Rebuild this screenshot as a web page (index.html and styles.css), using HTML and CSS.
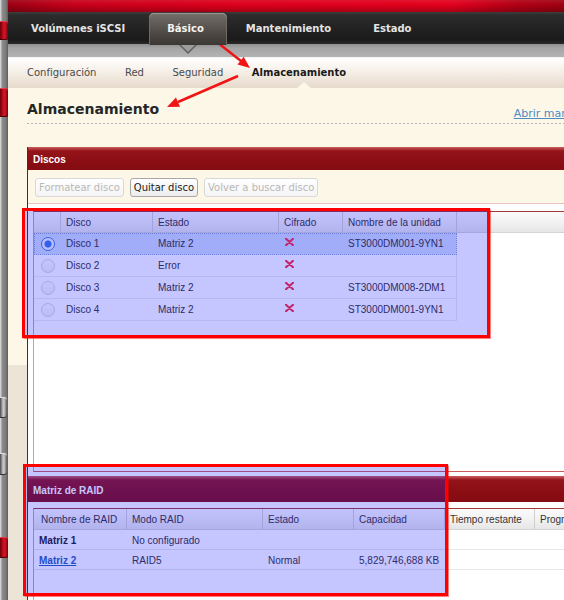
FILE: index.html
```html
<!DOCTYPE html>
<html lang="es">
<head>
<meta charset="utf-8">
<title>Almacenamiento</title>
<link rel="stylesheet" href="styles.css">
</head>
<body>
<div class="screen">
  <div class="edge">
    <span class="edge-red red1"></span>
    <span class="edge-red red2"></span>
    <span class="edge-knob knob1"></span>
    <span class="edge-knob knob2"></span>
    <span class="edge-red red3"></span>
  </div>
  <div class="main">
    <div class="topband"></div>
    <nav class="tabs">
      <span class="tab">Volúmenes iSCSI</span>
      <span class="tab active">Básico</span>
      <span class="tab">Mantenimiento</span>
      <span class="tab">Estado</span>
    </nav>
    <div class="greyband"></div>
    <nav class="subnav">
      <span class="sub">Configuración</span>
      <span class="sub">Red</span>
      <span class="sub">Seguridad</span>
      <span class="sub active">Almacenamiento</span>
    </nav>
    <div class="content">
      <div class="title-row">
        <h1 class="title">Almacenamiento</h1>
        <a class="manual" href="#">Abrir manual</a>
      </div>

      <section class="panel disks">
        <div class="panel-head">Discos</div>
        <div class="toolbar">
          <button class="btn" disabled>Formatear disco</button>
          <button class="btn">Quitar disco</button>
          <button class="btn" disabled>Volver a buscar disco</button>
        </div>
        <div class="gridbox disk-box">
          <div class="ghead">
            <div class="dcols">
              <span class="hc"></span>
              <span class="hc">Disco</span>
              <span class="hc">Estado</span>
              <span class="hc">Cifrado</span>
              <span class="hc">Nombre de la unidad</span>
            </div>
          </div>
          <div class="drows">
            <div class="drow dcols selected">
              <span class="rc"><i class="radio checked"></i></span>
              <span class="rc">Disco 1</span>
              <span class="rc">Matriz 2</span>
              <span class="rc cross-cell"><svg class="cross" viewBox="0 0 9 8" width="9" height="8"><path d="M1 0.8 L8 7.2 M8 0.8 L1 7.2"/></svg></span>
              <span class="rc">ST3000DM001-9YN1</span>
            </div>
            <div class="drow dcols">
              <span class="rc"><i class="radio"></i></span>
              <span class="rc">Disco 2</span>
              <span class="rc">Error</span>
              <span class="rc cross-cell"><svg class="cross" viewBox="0 0 9 8" width="9" height="8"><path d="M1 0.8 L8 7.2 M8 0.8 L1 7.2"/></svg></span>
              <span class="rc"></span>
            </div>
            <div class="drow dcols">
              <span class="rc"><i class="radio"></i></span>
              <span class="rc">Disco 3</span>
              <span class="rc">Matriz 2</span>
              <span class="rc cross-cell"><svg class="cross" viewBox="0 0 9 8" width="9" height="8"><path d="M1 0.8 L8 7.2 M8 0.8 L1 7.2"/></svg></span>
              <span class="rc">ST3000DM008-2DM1</span>
            </div>
            <div class="drow dcols">
              <span class="rc"><i class="radio"></i></span>
              <span class="rc">Disco 4</span>
              <span class="rc">Matriz 2</span>
              <span class="rc cross-cell"><svg class="cross" viewBox="0 0 9 8" width="9" height="8"><path d="M1 0.8 L8 7.2 M8 0.8 L1 7.2"/></svg></span>
              <span class="rc">ST3000DM001-9YN1</span>
            </div>
          </div>
        </div>
      </section>

      <section class="panel raid">
        <div class="panel-head">Matriz de RAID</div>
        <div class="gridbox raid-box">
          <div class="ghead rcols">
            <span class="hc first">Nombre de RAID</span>
            <span class="hc">Modo RAID</span>
            <span class="hc">Estado</span>
            <span class="hc">Capacidad</span>
            <span class="hc">Tiempo restante</span>
            <span class="hc">Progreso</span>
          </div>
          <div class="rrow rcols">
            <span class="rc first"><b>Matriz 1</b></span>
            <span class="rc">No configurado</span>
            <span class="rc"></span>
            <span class="rc"></span>
            <span class="rc"></span>
            <span class="rc"></span>
          </div>
          <div class="rrow rcols">
            <span class="rc first"><a class="raid-link" href="#">Matriz 2</a></span>
            <span class="rc">RAID5</span>
            <span class="rc">Normal</span>
            <span class="rc">5,829,746,688 KB</span>
            <span class="rc"></span>
            <span class="rc"></span>
          </div>
        </div>
      </section>
    </div>
  </div>

  <div class="mark mark-disks"></div>
  <div class="mark mark-raid"></div>
  <svg class="arrows" width="564" height="600" viewBox="0 0 564 600">
    <line x1="199" y1="28" x2="241" y2="61" />
    <polygon points="250,68 237.5,64.5 243.7,56.7" />
    <line x1="238" y1="76" x2="178" y2="102" />
    <polygon points="167,107 176,97.6 180,106.8" />
  </svg>
</div>
</body>
</html>
```
FILE: styles.css
```css
* { box-sizing: border-box; }

body {
  margin: 0;
  background: #fdf7e8;
  font-family: "DejaVu Sans", Verdana, sans-serif;
}

.screen {
  position: relative;
  display: flex;
  width: 564px;
  height: 600px;
  overflow: hidden;
}

/* left window edge */
.edge {
  flex: none;
  width: 8px;
  display: flex;
  flex-direction: column;
  background: linear-gradient(to right, #cfcfcf 0, #cfcfcf 1px, #8c8c8c 2px, #7a7a7a 6px, #5a5a5a 8px);
}
.edge-red {
  display: block;
  width: 8px;
  border-radius: 0 2px 2px 0;
  background: linear-gradient(to right, #6e0008, #c81020 45%, #d41626 60%, #7a000a);
  box-shadow: inset 0 1px 0 #e04050, inset 0 -1px 0 #500005;
}
.edge-knob {
  display: block;
  width: 7px;
  border-radius: 0 3px 3px 0;
  background: linear-gradient(to right, #4a4a4a, #b8b8b8 40%, #d0d0d0 55%, #5a5a5a);
  box-shadow: inset 0 1px 0 #ddd, inset 0 -1px 0 #333;
}
.red1 { margin-top: 21px; height: 19px; }
.red2 { margin-top: 48px; height: 29px; }
.knob1 { margin-top: 280px; height: 21px; }
.knob2 { margin-top: 35px; height: 22px; }
.red3 { margin-top: 62px; height: 21px; }

.main {
  flex: 1;
  min-width: 0;
  display: flex;
  flex-direction: column;
  overflow: hidden;
}

/* top red band */
.topband {
  flex: none;
  height: 12px;
  background:
    linear-gradient(to bottom, rgba(255,255,255,0.08), rgba(0,0,0,0) 40%, rgba(0,0,0,0.25)),
    linear-gradient(to right, #9c0012 0, #c8001a 12%, #dc001c 40%, #e2001d 80%, #b00014 92%, #a00012 100%);
}

/* main tabs */
.tabs {
  flex: none;
  position: relative;
  z-index: 2;
  display: flex;
  height: 32px;
  padding-left: 2px;
  background: linear-gradient(to bottom, #3e3e3e 0, #2c2c2c 3px, #202020 60%, #1a1a1a 88%, #2a2a2a 100%);
}
.tab {
  position: relative;
  margin-top: 1px;
  height: 31px;
  padding: 1px 21px 0;
  line-height: 30px;
  font-size: 10px;
  font-weight: bold;
  color: #e4e4e4;
  white-space: nowrap;
}
.tab.active {
  height: 32px;
  margin-left: 3px;
  margin-right: -2px;
  padding: 1px 23px 0 18px;
  color: #f4f4f4;
  border-radius: 5px 5px 0 0;
  background: linear-gradient(to bottom, #74706b 0, #625d58 30%, #4a4540 70%, #3c3833 100%);
  box-shadow: inset 0 1px 0 #9a958f, inset 1px 0 0 #6f6a64, inset -1px 0 0 #6f6a64;
}
.tab.active::before,
.tab.active::after {
  content: "";
  position: absolute;
  left: 50%;
  width: 0;
  height: 0;
  border-style: solid;
  border-color: transparent;
}
.tab.active::before {
  top: 32px;
  margin-left: -9px;
  border-width: 9px 9px 0 9px;
  border-top-color: #5e5e5e;
}
.tab.active::after {
  top: 32px;
  margin-left: -7px;
  border-width: 7px 7px 0 7px;
  border-top-color: #9d9d9d;
}

.greyband {
  flex: none;
  height: 14px;
  border-bottom: 1px solid #f2f2f2;
  background: linear-gradient(to bottom, #8e8e8e 0, #a4a4a4 30%, #b4b4b4 100%);
}

/* sub navigation */
.subnav {
  flex: none;
  display: flex;
  height: 30px;
  padding-left: 19px;
  gap: 28.5px;
  background: linear-gradient(to bottom, #ffffff 0, #f7f1ea 40%, #e6dacb 100%);
}
.sub {
  position: relative;
  line-height: 29px;
  font-size: 10px;
  color: #4a4a4a;
  white-space: nowrap;
}
.sub.active {
  font-weight: bold;
  color: #1a1a1a;
}
.sub.active::after {
  content: "";
  position: absolute;
  left: 44px;
  bottom: -1px;
  width: 0;
  height: 0;
  border-style: solid;
  border-width: 0 8px 7px 8px;
  border-color: transparent transparent #fdf7e8 transparent;
}

/* content */
.content {
  flex: 1;
  padding: 12px 0 0 19px;
  background-color: #fdf7e8;
  background-image: linear-gradient(to bottom, rgba(0,0,0,0) 277px, #ece5d7 277px);
  background-size: 19px 100%;
  background-repeat: no-repeat;
}

.title-row {
  display: flex;
  justify-content: space-between;
  align-items: flex-end;
  width: 558px;
  padding-bottom: 6px;
  background-image: repeating-linear-gradient(to right, #b4b4b4 0, #b4b4b4 2px, transparent 2px, transparent 4px);
  background-size: 100% 1px;
  background-position: left bottom;
  background-repeat: no-repeat;
}
.title {
  margin: 0;
  font-size: 14px;
  line-height: 18px;
  font-weight: bold;
  color: #262626;
}
.manual {
  margin-bottom: -2px;
  font-size: 11px;
  line-height: 13px;
  color: #4a8cc4;
  text-decoration: underline;
  white-space: nowrap;
}

/* panels */
.panel {
  width: 640px;
  border-left: 1px solid #781818;
  background: #ffffff;
}
.panel.disks {
  margin-top: 23px;
  padding-bottom: 4px;
}
.panel-head {
  font-family: "Liberation Sans", Arial, sans-serif;
  font-size: 10px;
  font-weight: bold;
  color: #ffffff;
  padding-left: 5px;
  background: linear-gradient(to bottom, #c86060 0, #b23a3c 2px, #941419 4px, #8a0e14 60%, #850c12 100%);
}
.disks .panel-head {
  height: 23px;
  padding-top: 2px;
  line-height: 21px;
}
.raid .panel-head {
  height: 26px;
  padding-top: 4px;
  line-height: 22px;
}

.toolbar {
  display: flex;
  gap: 6px;
  padding: 8px 7px 6px;
  background: #fdf7e8;
  border-bottom: 1px solid #e8c2c2;
}
.btn {
  height: 19px;
  margin: 0;
  padding: 0 3px;
  font-family: "DejaVu Sans", Verdana, sans-serif;
  font-size: 10px;
  line-height: 17px;
  color: #222222;
  border: 1px solid #a8a8a8;
  border-radius: 3px;
  background: linear-gradient(to bottom, #ffffff, #ececec);
}
.btn:disabled {
  color: #b8b8b8;
  border-color: #d8d8d8;
  background: linear-gradient(to bottom, #ffffff, #f4f4f4);
}

/* grids */
.gridbox {
  margin-left: 5px;
  border-left: 1px solid #dc9898;
  border-top: 1px solid #a33636;
  background: #ffffff;
  font-family: "Liberation Sans", Arial, sans-serif;
  font-size: 10px;
  color: #333333;
}
.disk-box {
  margin-top: 7px;
  height: 261px;
  border-bottom: 1px solid #cc5a5a;
}
.raid-box {
  margin-top: 6px;
  height: 120px;
}
.ghead {
  height: 21px;
  border-bottom: 1px solid #d4d4d4;
  background: linear-gradient(to bottom, #fbfbfb 0, #f2f2f2 50%, #e6e6e6 100%);
}
.dcols {
  display: grid;
  grid-template-columns: 27px 92px 126px 64px 114px;
  width: 423px;
}
.rcols {
  display: grid;
  grid-template-columns: 93px 136px 91px 91px 90px 90px;
}
.hc {
  height: 20px;
  padding: 2px 0 0 5px;
  line-height: 18px;
  border-right: 1px solid #d0d0d0;
  white-space: nowrap;
  overflow: hidden;
}
.hc.first, .rc.first { padding-left: 7px; }

.drow {
  height: 22px;
  border-bottom: 1px solid #ebebeb;
  border-right: 1px solid #ebebeb;
}
.drow .rc {
  display: flex;
  align-items: center;
  padding-left: 5px;
  line-height: 21px;
  white-space: nowrap;
}
.drow .rc:first-child { padding-left: 7px; }
.drow.selected {
  background: #cfdff6;
  outline: 1px dotted #8aa4d6;
  outline-offset: -1px;
}
.cross-cell { padding-left: 6px !important; padding-bottom: 3px; }
.cross {
  display: block;
  fill: none;
  stroke: #ff2a3c;
  stroke-width: 2.1;
  stroke-linecap: round;
}

.radio {
  display: block;
  width: 14px;
  height: 14px;
  border-radius: 50%;
  border: 1px solid #d4d4e0;
  background: linear-gradient(to bottom, #ffffff, #f2f2f2);
}
.radio.checked {
  border: 1.5px solid #3f7fdc;
  background: radial-gradient(circle, #3a7ae0 0, #3a7ae0 3.2px, #e9f0fc 3.9px, #ffffff 100%);
}

.rrow {
  height: 20px;
  border-bottom: 1px solid #e6e6e6;
}
.rrow .rc {
  padding: 2px 0 0 5px;
  line-height: 17px;
  white-space: nowrap;
}
.rrow b { color: #222222; }
.raid-link {
  font-weight: bold;
  color: #1f5fb6;
  text-decoration: underline;
}

/* annotation overlays */
.mark {
  position: absolute;
  border: 3px solid #ff0000;
  background: rgba(25, 25, 255, 0.25);
  box-shadow: 0 0 1px 0.5px rgba(255, 0, 0, 0.5);
  pointer-events: none;
}
.mark-disks { left: 22px; top: 208px; width: 468px; height: 130px; }
.mark-raid { left: 23px; top: 464px; width: 425px; height: 132px; }

.arrows {
  position: absolute;
  left: 0;
  top: 0;
  pointer-events: none;
}
.arrows line {
  stroke: #f01414;
  stroke-width: 2.5;
}
.arrows polygon {
  fill: #f01414;
}
```
